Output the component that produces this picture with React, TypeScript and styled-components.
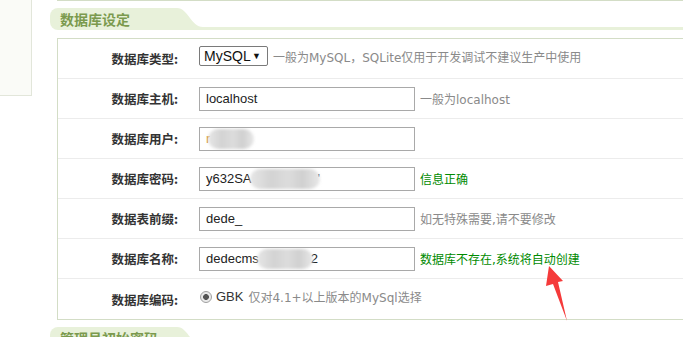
import styled, { createGlobalStyle } from "styled-components";

const GlobalStyle = createGlobalStyle`
  html, body {
    margin: 0;
    padding: 0;
    background: #fff;
  }
  body {
    font-family: "Liberation Sans", "Noto Sans CJK SC", sans-serif;
  }
`;

// PAGE FRAME
const Page = styled.div`
  position: relative;
  display: flex;
  width: 683px;
  height: 337px;
  overflow: hidden;
  background: #fff;
`;

const Sidebar = styled.aside`
  flex-shrink: 0;
  width: 32px;
  height: 96px;
  box-sizing: border-box;
  background: #fafbf7;
  border-right: 1px solid #e2e6da;
  border-bottom: 1px solid #e2e6da;
`;

const Main = styled.main`
  flex: 1;
  min-width: 0;
  margin-left: 18px;
  display: flex;
  flex-direction: column;
`;

const PrevBox = styled.div`
  margin-left: 7px;
  height: 1px;
  border-left: 1px solid #d3ddc6;
  border-bottom: 1px solid #d3ddc6;
`;

// SECTION TAB
const TabBar = styled.div`
  display: flex;
  align-items: flex-end;
  height: 22px;
  margin-top: 7px;
  flex-shrink: 0;
`;

const TabLabel = styled.div`
  height: 100%;
  width: 117px;
  padding-left: 10px;
  border-radius: 8px 0 0 8px;
  background: #e8f1da;
  color: #7b9a4e;
  font: bold 14px "Noto Sans CJK SC", sans-serif;
  line-height: 22px;
  white-space: nowrap;
`;

const Shoulder = styled.svg`
  display: block;
  flex-shrink: 0;
`;

const TabStrip = styled.div`
  flex: 1;
  height: 3px;
  background: #e8f1da;
`;

// FORM BOX
const Box = styled.div`
  margin: 8px -20px 0 7px;
  border: 1px solid #d3ddc6;
  border-right: none;
  flex-shrink: 0;
`;

const Row = styled.div<{ $last?: boolean }>`
  display: grid;
  grid-template-columns: 120px 1fr;
  column-gap: 21px;
  align-items: center;
  height: 40px;
  box-sizing: border-box;
  border-bottom: ${(p) => (p.$last ? "none" : "1px solid #ececec")};
`;

const Label = styled.div`
  text-align: right;
  color: #333;
  font: bold 12.5px "Noto Sans CJK SC", sans-serif;
  white-space: nowrap;
`;

const Field = styled.div<{ $lift?: number }>`
  display: flex;
  align-items: center;
  gap: 5px;
  margin-top: ${(p) => -(p.$lift ?? 0)}px;
  white-space: nowrap;
`;

const FakeSelect = styled.div`
  display: flex;
  align-items: center;
  justify-content: space-between;
  width: 69px;
  height: 20px;
  box-sizing: border-box;
  padding: 0 6px 0 4px;
  border: 1px solid #7a7a7a;
  border-radius: 2px;
  color: #111;
  font: 14px "Liberation Sans", sans-serif;

  .caret {
    font-size: 9px;
  }
`;

const Input = styled.div`
  display: flex;
  align-items: center;
  width: 216px;
  height: 24px;
  box-sizing: border-box;
  padding: 0 6px;
  border: 1px solid #a9a9a9;
  color: #222;
  font: 13px "Liberation Sans", sans-serif;
  overflow: hidden;
`;

const Blur = styled.span<{ $w: number }>`
  display: inline-block;
  width: ${(p) => p.$w}px;
  height: 20px;
  margin: 0 -2px;
  border-radius: 10px;
  background: linear-gradient(90deg, #e6e6e6, #d3d3d3 30%, #dcdcdc 55%, #d0d0d0 75%, #e8e8e8);
  filter: blur(1.5px);
`;

const Hint = styled.span<{ $ok?: boolean }>`
  color: ${(p) => (p.$ok ? "#008a00" : "#8a8a8a")};
  font: 12px "DejaVu Sans", "Noto Sans CJK SC", sans-serif;
`;

const Radio = styled.span`
  display: inline-block;
  width: 12px;
  height: 12px;
  box-sizing: border-box;
  margin-left: 1px;
  border: 1px solid #a0a0a0;
  border-radius: 50%;
  background: radial-gradient(circle, #555 0 2.6px, #eaeaea 3.2px);
`;

const Choice = styled.span`
  margin-left: -1px;
  color: #333;
  font: 13px "Liberation Sans", sans-serif;
`;

const Arrow = styled.svg`
  position: absolute;
  left: 540px;
  top: 262px;
  pointer-events: none;
`;

function SectionTab({ title }: { title: string }) {
  return (
    <TabBar>
      <TabLabel>{title}</TabLabel>
      <Shoulder width="26" height="22" viewBox="0 0 26 22">
        <path d="M0 0 C11 0 14 19 26 19 L26 22 L0 22 Z" fill="#e8f1da" />
      </Shoulder>
      <TabStrip />
    </TabBar>
  );
}

export default function App() {
  return (
    <>
      <GlobalStyle />
      <Page>
        <Sidebar />
        <Main>
          <PrevBox />
          <SectionTab title="数据库设定" />
          <Box>
            <Row>
              <Label>数据库类型:</Label>
              <Field $lift={5}>
                <FakeSelect>
                  MySQL <span className="caret">▼</span>
                </FakeSelect>
                <Hint>一般为MySQL，SQLite仅用于开发调试不建议生产中使用</Hint>
              </Field>
            </Row>
            <Row>
              <Label>数据库主机:</Label>
              <Field>
                <Input>localhost</Input>
                <Hint>一般为localhost</Hint>
              </Field>
            </Row>
            <Row>
              <Label>数据库用户:</Label>
              <Field>
                <Input>
                  <span style={{ color: "#d08a20" }}>r</span>
                  <Blur $w={46} />
                </Input>
              </Field>
            </Row>
            <Row>
              <Label>数据库密码:</Label>
              <Field>
                <Input>
                  y632SA
                  <Blur $w={70} />
                  '
                </Input>
                <Hint $ok>信息正确</Hint>
              </Field>
            </Row>
            <Row>
              <Label>数据表前缀:</Label>
              <Field>
                <Input>dede_</Input>
                <Hint>如无特殊需要,请不要修改</Hint>
              </Field>
            </Row>
            <Row>
              <Label>数据库名称:</Label>
              <Field>
                <Input>
                  dedecms
                  <Blur $w={56} />2
                </Input>
                <Hint $ok>数据库不存在,系统将自动创建</Hint>
              </Field>
            </Row>
            <Row $last>
              <Label>数据库编码:</Label>
              <Field $lift={5}>
                <Radio />
                <Choice>GBK</Choice>
                <Hint>仅对4.1+以上版本的MySql选择</Hint>
              </Field>
            </Row>
          </Box>
          <SectionTab title="管理员初始密码" />
        </Main>
        <Arrow width="30" height="62" viewBox="540 262 30 62">
          <path d="M549 266 L563 281 L558 282 L567 321 L553 284 L546 286 Z" fill="#f53a3a" />
        </Arrow>
      </Page>
    </>
  );
}
